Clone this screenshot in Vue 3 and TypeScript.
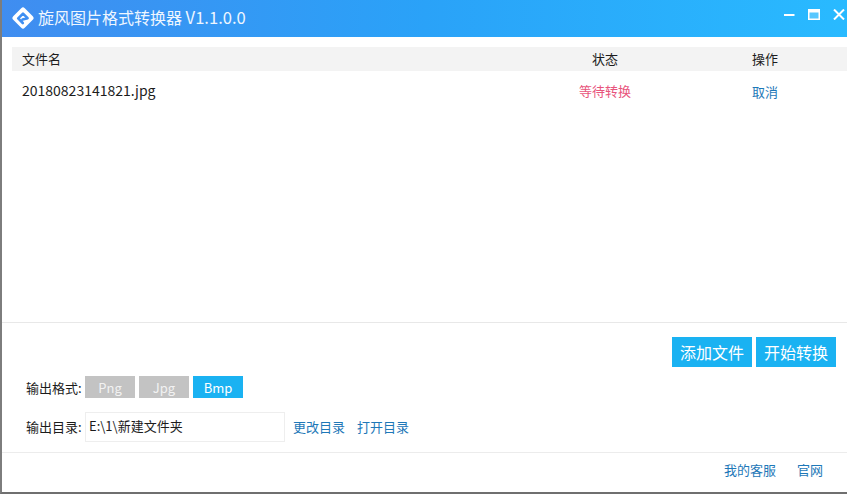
<script setup lang="ts">
interface FileRow { name: string; status: string; action: string }
const rows: FileRow[] = [{ name: '20180823141821.jpg', status: '等待转换', action: '取消' }]
const formats = ['Png', 'Jpg', 'Bmp']
const active = 'Bmp'
</script>

<template>
  <div class="window">
    <header class="titlebar">
      <svg class="logo" width="22" height="22" viewBox="0 0 22 22">
        <path d="M11 3 L19 11 L11 19 L3 11 Z" fill="#fff" stroke="#fff" stroke-width="5" stroke-linejoin="round"/>
        <path d="M10.8 16 L6.2 11.4 L11 6.6 L15.6 11.2 L10.6 12.6" fill="none" stroke="#3f8ff2" stroke-width="2.6" stroke-linejoin="round" stroke-linecap="round"/>
      </svg>
      <span class="title">旋风图片格式转换器 <span class="ver">V1.1.0.0</span></span>
      <div class="controls">
        <svg width="11" height="11" viewBox="0 0 11 11"><path d="M0 6 H10.5" stroke="#fff" stroke-width="2"/></svg>
        <svg width="12" height="11" viewBox="0 0 12 11"><rect x=".75" y=".75" width="10.5" height="9.5" fill="rgba(255,255,255,.22)" stroke="#fff" stroke-width="1.5"/><path d="M0 2 H12" stroke="#fff" stroke-width="3"/></svg>
        <svg width="12" height="11" viewBox="0 0 12 11"><path d="M1 .5 L11 10.5 M11 .5 L1 10.5" stroke="#fff" stroke-width="2"/></svg>
      </div>
    </header>

    <section class="list">
      <div class="row head">
        <span class="c-name">文件名</span>
        <span class="c-status">状态</span>
        <span class="c-action">操作</span>
      </div>
      <div v-for="row in rows" :key="row.name" class="row item">
        <span class="c-name file">{{ row.name }}</span>
        <span class="c-status pending">{{ row.status }}</span>
        <a class="c-action link cancel">{{ row.action }}</a>
      </div>
    </section>

    <section class="options">
      <div class="actions">
        <button class="primary">添加文件</button>
        <button class="primary">开始转换</button>
      </div>
      <div class="format-row">
        <span class="label">输出格式:</span>
        <button v-for="f in formats" :key="f" class="fmt" :class="{ on: f === active }">{{ f }}</button>
      </div>
      <div class="dir-row">
        <span class="label lift">输出目录:</span>
        <div class="dir-input">E:\1\新建文件夹</div>
        <a class="link change lift">更改目录</a>
        <a class="link open lift">打开目录</a>
      </div>
    </section>

    <footer class="footer">
      <a class="link">我的客服</a>
      <a class="link">官网</a>
    </footer>
  </div>
</template>

<style>
html, body { margin: 0; background: #fff; }
</style>

<style scoped>
.window {
  box-sizing: border-box;
  width: 847px;
  height: 494px;
  display: flex;
  flex-direction: column;
  background: #fff;
  border-left: 2px solid #7d7d7d;
  border-bottom: 2px solid #6f6f6f;
  font-family: "Noto Sans CJK SC", "Liberation Sans", sans-serif;
  font-size: 13px;
  color: #1c1c1c;
  overflow: hidden;
}
.titlebar {
  height: 37px;
  flex: none;
  margin-left: -2px;
  display: flex;
  align-items: center;
  padding: 0 2px 0 12px;
  background: linear-gradient(90deg, #408df0 0%, #2aa2f8 50%, #29baff 100%);
  color: #fff;
}
.logo { flex: none; margin-top: -2px; }
.title { margin-left: 4px; margin-bottom: 3px; font-size: 16px; line-height: 30px; color: #eef6ff; white-space: nowrap; }
.ver { font-size: 16.6px; }
.controls { margin-left: auto; margin-bottom: 9px; display: flex; align-items: center; gap: 13px; }
.list { height: 286px; flex: none; padding: 10px 0 0 10px; border-bottom: 1px solid #e8e8e8; box-sizing: border-box; }
.row { display: flex; align-items: center; padding-left: 10px; }
.head { height: 24px; background: #f3f3f3; padding-bottom: 2px; box-sizing: border-box; }
.item { height: 38px; }
.file { font-size: 14px; }
.c-name { width: 556px; white-space: nowrap; }
.c-status { width: 54px; text-align: center; }
.c-action { margin-left: 120px; width: 26px; white-space: nowrap; }
.cancel { padding-top: 2px; }
.pending { color: #e8547c; }
.link { color: #1e78b8; white-space: nowrap; }
.options { height: 130px; flex: none; box-sizing: border-box; border-bottom: 1px solid #ececec; padding: 14px 11px 0 24px; }
.actions { display: flex; justify-content: flex-end; gap: 4px; }
.primary {
  width: 80px; height: 30px; border: 0; padding: 0;
  background: #1ab2f2; color: #fff; font: inherit; font-size: 16px;
}
.format-row { display: flex; align-items: center; margin-top: 9px; height: 22px; }
.label { width: 59px; flex: none; white-space: nowrap; }
.fmt {
  width: 50px; height: 22px; border: 0; padding: 0; margin-right: 4px;
  background: #c3c3c3; color: #f2f2f2; font: inherit; font-size: 13px;
}
.fmt.on { background: #1ab2f2; color: #fff; }
.dir-row { display: flex; align-items: center; margin-top: 14px; height: 30px; }
.lift { margin-bottom: 2px; }
.dir-input {
  box-sizing: border-box; width: 200px; height: 30px; line-height: 26px;
  border: 1px solid #eeeeee; padding-left: 3px;
}
.change { margin-left: 8px; }
.open { margin-left: 12px; }
.footer { flex: 1; display: flex; justify-content: flex-end; align-items: center; gap: 21px; padding: 0 24px 6px 0; }
</style>
